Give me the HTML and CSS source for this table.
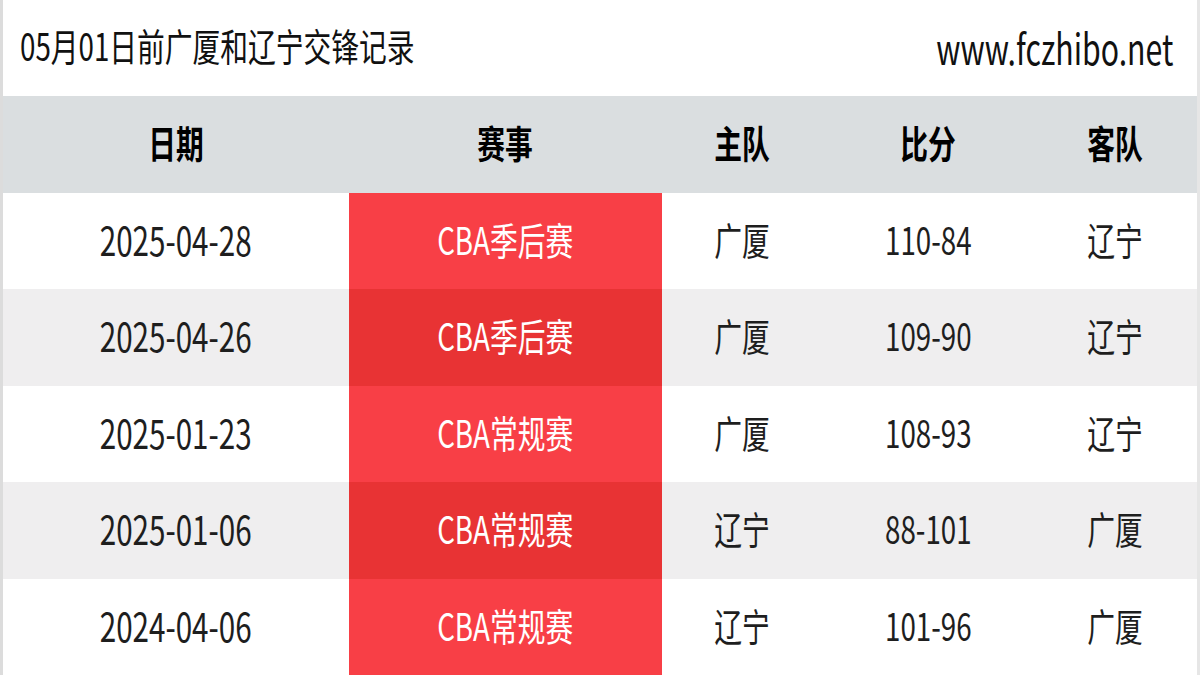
FILE: index.html
```html
<!DOCTYPE html>
<html lang="zh-CN">
<head>
<meta charset="utf-8">
<title>05月01日前广厦和辽宁交锋记录</title>
<link rel="stylesheet" href="styles.css">
</head>
<body>
<div class="page">
  <div class="topbar">
    <span class="t title">05月01日前广厦和辽宁交锋记录</span>
    <span class="t site">www.fczhibo.net</span>
  </div>
  <table class="grid">
    <colgroup>
      <col class="c1"><col class="c2"><col class="c3"><col class="c4"><col class="c5">
    </colgroup>
    <thead>
      <tr><th><span class="t">日期</span></th><th><span class="t">赛事</span></th><th><span class="t">主队</span></th><th><span class="t">比分</span></th><th><span class="t">客队</span></th></tr>
    </thead>
    <tbody>
      <tr><td><span class="t date">2025-04-28</span></td><td class="ev"><span class="t">CBA季后赛</span></td><td><span class="t">广厦</span></td><td><span class="t">110-84</span></td><td><span class="t">辽宁</span></td></tr>
      <tr><td><span class="t date">2025-04-26</span></td><td class="ev"><span class="t">CBA季后赛</span></td><td><span class="t">广厦</span></td><td><span class="t">109-90</span></td><td><span class="t">辽宁</span></td></tr>
      <tr><td><span class="t date">2025-01-23</span></td><td class="ev"><span class="t">CBA常规赛</span></td><td><span class="t">广厦</span></td><td><span class="t">108-93</span></td><td><span class="t">辽宁</span></td></tr>
      <tr><td><span class="t date">2025-01-06</span></td><td class="ev"><span class="t">CBA常规赛</span></td><td><span class="t">辽宁</span></td><td><span class="t">88-101</span></td><td><span class="t">广厦</span></td></tr>
      <tr><td><span class="t date">2024-04-06</span></td><td class="ev"><span class="t">CBA常规赛</span></td><td><span class="t">辽宁</span></td><td><span class="t">101-96</span></td><td><span class="t">广厦</span></td></tr>
    </tbody>
  </table>
</div>
</body>
</html>
```

FILE: styles.css
```css
html, body {
  margin: 0;
  padding: 0;
  background: #ffffff;
}
body {
  font-family: "Noto Sans CJK SC", "Noto Sans", sans-serif;
  color: #1a1a1a;
}
.page {
  width: 1200px;
  height: 675px;
  box-sizing: border-box;
  border-left: 3px solid #dcdcdc;
  border-right: 3px solid #e6e6e6;
  overflow: hidden;
}
.topbar {
  height: 96px;
  display: flex;
  align-items: center;
  justify-content: space-between;
  padding: 0 24px 4px 17px;
  box-sizing: border-box;
}
.t {
  display: inline-block;
  transform: translateY(-2px) scaleX(0.73);
  white-space: nowrap;
}
.title {
  font-size: 38px;
  transform-origin: left center;
  color: #111;
}
.site {
  font-size: 42px;
  transform: scaleX(0.72);
  transform-origin: right center;
  color: #111;
}
.grid {
  width: 100%;
  border-collapse: collapse;
  table-layout: fixed;
}
.c1 { width: 346px; }
.c2 { width: 313px; }
.c3 { width: 160px; }
.c4 { width: 212px; }
.c5 { width: auto; }
.grid th, .grid td {
  height: 96.5px;
  padding: 0;
  text-align: center;
  vertical-align: middle;
  font-size: 38px;
  line-height: 1;
}
.grid th {
  background: #dadee0;
  color: #000;
  font-weight: 700;
}
.grid td {
  color: #1e1e1e;
  font-weight: 400;
}
.grid td .date {
  font-size: 40px;
  transform: translateY(-2px) scaleX(0.74);
}
.grid tbody tr:nth-child(even) td {
  background: #efeeef;
}
.grid td.ev {
  background: #f83f46;
  color: #ffffff;
}
.grid tbody tr:nth-child(even) td.ev {
  background: #e83334;
}
```
